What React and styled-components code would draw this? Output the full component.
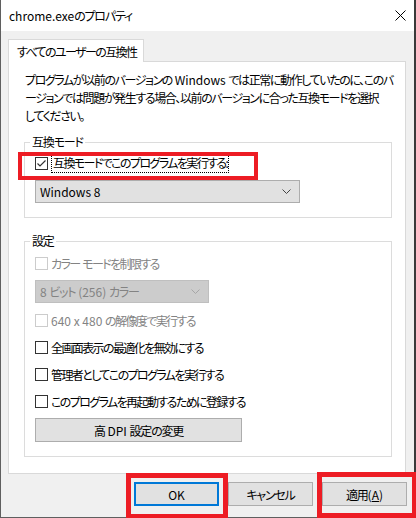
import React from "react"
import styled, { createGlobalStyle } from "styled-components"

const GlobalStyle = createGlobalStyle`
  html, body {
    margin: 0;
    padding: 0;
    background: #3a3a3a;
  }

  body {
    font-family: "Noto Sans CJK JP", "Noto Sans", sans-serif;
    font-size: 12px;
    font-feature-settings: "palt";
    letter-spacing: -1px;
    color: #000;
  }
`

// latin runs keep their natural spacing, only the kana/kanji are tightened
const Latin = styled.span`
  letter-spacing: 0;
`

const Window = styled.div`
  display: flex;
  flex-direction: column;

  box-sizing: border-box;
  width: 414px;
  height: 518px;

  background: #f0f0f0;
  border-left: 1px solid #5f5f5f;
  border-bottom: 1px solid #5f5f5f;
`

const TitleBar = styled.div`
  display: flex;
  align-items: center;
  justify-content: space-between;

  height: 31px;
  padding: 0 8px 0 8px;

  background: #fff;
`

const Title = styled.span`
  font-size: 12px;
  line-height: 16px;
  letter-spacing: -1.2px;
`

const Body = styled.div`
  display: flex;
  flex-direction: column;
  flex: 1;

  padding: 8px 7px 0 7px;
`

const TabStrip = styled.div`
  display: flex;
`

const Tab = styled.div`
  position: relative;
  z-index: 1;

  height: 22px;
  margin-bottom: -1px;
  padding: 0 7px 0 8px;

  line-height: 23px;
  letter-spacing: -1.6px;
  background: #fff;
  border: 1px solid #d9d9d9;
  border-bottom: none;
`

const Panel = styled.div`
  display: flex;
  flex-direction: column;

  height: 413px;
  box-sizing: border-box;
  margin-right: 1px;
  padding: 9px 13px 0 15px;

  background: #fff;
  border: 1px solid #d9d9d9;
`

const Description = styled.p`
  margin: 0 0 9px 1px;
  line-height: 18px;
  letter-spacing: -1.4px;
  white-space: nowrap;
`

const Group = styled.fieldset`
  display: flex;
  flex-direction: column;
  gap: 7px;

  margin: ${(p) => p.$mt || 0}px 0 0 0;
  padding: ${(p) => p.$pt}px 10px ${(p) => p.$pb}px 10px;
  min-width: 0;

  border: 1px solid #dcdcdc;
`

const Legend = styled.legend`
  margin-left: -5px;
  padding: 0 2px;
  line-height: 16px;
  letter-spacing: -1.2px;
`

const Row = styled.label`
  position: relative;
  display: flex;
  align-items: center;
  gap: 2px;

  height: 20px;
  letter-spacing: -1.6px;
  color: ${(p) => (p.$disabled ? "#838383" : "#000")};
`

const Box = styled.span`
  display: flex;
  align-items: center;
  justify-content: center;
  flex-shrink: 0;

  box-sizing: border-box;
  width: 13px;
  height: 13px;
  margin-right: 1px;

  background: #fff;
  border: 1px solid ${(p) => (p.$disabled ? "#cccccc" : "#333333")};
`

const FocusText = styled.span`
  padding: 0 1px;
  line-height: 18px;
  border: 1px dotted #000;
`

const Highlight = styled.span`
  position: absolute;
  left: ${(p) => p.$left}px;
  top: ${(p) => p.$top}px;
  width: ${(p) => p.$w}px;
  height: ${(p) => p.$h}px;

  box-sizing: border-box;
  border: ${(p) => p.$t || 5}px solid #ed1c24;
  pointer-events: none;
`

const Select = styled.div`
  display: flex;
  align-items: center;
  justify-content: space-between;

  box-sizing: border-box;
  width: ${(p) => p.$w}px;
  height: 23px;
  padding: 0 8px 0 4px;

  letter-spacing: -1.2px;
  color: ${(p) => (p.$disabled ? "#838383" : "#000")};
  background: ${(p) => (p.$disabled ? "#cccccc" : "#e1e1e1")};
  border: 1px solid ${(p) => (p.$disabled ? "#bfbfbf" : "#adadad")};
`

const Button = styled.div`
  position: relative;
  display: flex;
  align-items: center;
  justify-content: center;

  box-sizing: border-box;
  width: ${(p) => p.$w || 85}px;
  height: 24px;

  letter-spacing: -1.2px;
  background: #e1e1e1;
  border: ${(p) => (p.$default ? "2px solid #0078d7" : "1px solid #adadad")};
`

const Footer = styled.div`
  display: flex;
  justify-content: flex-end;
  gap: 9px;

  margin-top: 8px;
`

const Check = () => (
  <svg width="11" height="11" viewBox="0 0 11 11">
    <polyline points="1.5,5.5 4,8 9.5,2.5" fill="none" stroke="#333" strokeWidth="1.2" />
  </svg>
)

const Chevron = ({ color }) => (
  <svg width="9" height="5" viewBox="0 0 9 5">
    <polyline points="0.5,0.5 4.5,4.5 8.5,0.5" fill="none" stroke={color} strokeWidth="1" />
  </svg>
)

const CloseIcon = () => (
  <svg width="11" height="11" viewBox="0 0 11 11">
    <path d="M0.5 0.5 L10.5 10.5 M10.5 0.5 L0.5 10.5" stroke="#000" strokeWidth="1" />
  </svg>
)

const CheckRow = ({ checked, disabled, children }) => (
  <Row $disabled={disabled}>
    <Box $disabled={disabled}>{checked && <Check />}</Box>
    <span>{children}</span>
  </Row>
)

export default function App() {
  return (
    <>
      <GlobalStyle />
      <Window>
        <TitleBar>
          <Title>
            <Latin>chrome.exe</Latin>のプロパティ
          </Title>
          <CloseIcon />
        </TitleBar>

        <Body>
          <TabStrip>
            <Tab>すべてのユーザーの互換性</Tab>
          </TabStrip>

          <Panel>
            <Description>
              プログラムが以前のバージョンの<Latin> Windows </Latin>では正常に動作していたのに、このバ
              <br />
              ージョンでは問題が発生する場合、以前のバージョンに合った互換モードを選択
              <br />
              してください。
            </Description>

            <Group $pt={3} $pb={14}>
              <Legend>互換モード</Legend>
              <Row>
                <Box>
                  <Check />
                </Box>
                <FocusText>互換モードでこのプログラムを実行する:</FocusText>
                <Highlight $left={-17} $top={-1} $w={240} $h={28} $t={4} />
              </Row>
              <Select $w={265}>
                <Latin>Windows 8</Latin>
                <Chevron color="#444" />
              </Select>
            </Group>

            <Group $mt={15} $pt={4} $pb={14}>
              <Legend>設定</Legend>
              <CheckRow disabled>
                カラー<Latin> </Latin>モードを制限する
              </CheckRow>
              <Select $w={174} $disabled>
                <span>
                  <Latin>8 </Latin>ビット<Latin> (256) </Latin>カラー
                </span>
                <Chevron color="#a6a6a6" />
              </Select>
              <CheckRow disabled>
                <Latin>640 x 480 </Latin>の解像度で実行する
              </CheckRow>
              <CheckRow>全画面表示の最適化を無効にする</CheckRow>
              <CheckRow>管理者としてこのプログラムを実行する</CheckRow>
              <CheckRow>このプログラムを再起動するために登録する</CheckRow>
              <Button $w={207}>
                <span>
                  高<Latin> DPI </Latin>設定の変更
                </span>
              </Button>
            </Group>
          </Panel>

          <Footer>
            <Button $default>
              <Latin>OK</Latin>
              <Highlight $left={-10} $top={-11} $w={102} $h={46} />
            </Button>
            <Button>
              <span>キャンセル</span>
            </Button>
            <Button>
              <span>
                適用<Latin>(<u>A</u>)</Latin>
              </span>
              <Highlight $left={-6} $top={-11} $w={100} $h={46} />
            </Button>
          </Footer>
        </Body>
      </Window>
    </>
  )
}
